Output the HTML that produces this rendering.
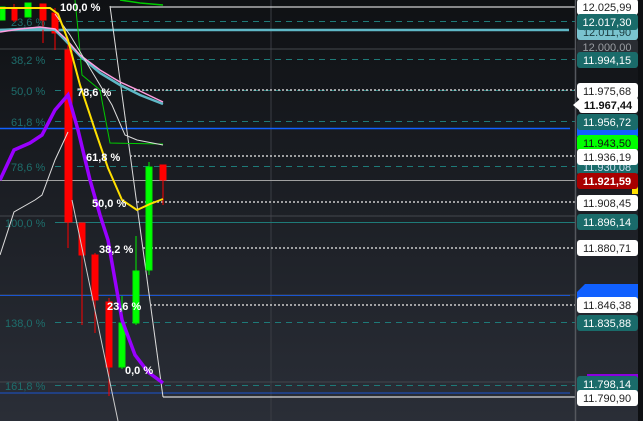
<!DOCTYPE html>
<html><head><style>
html,body{margin:0;padding:0;width:643px;height:421px;overflow:hidden;background:#15181d}
svg{display:block}
text{font-family:"Liberation Sans",sans-serif}
</style></head><body>
<svg width="643" height="421" viewBox="0 0 643 421" xmlns="http://www.w3.org/2000/svg">
<defs><linearGradient id="bg" x1="0" y1="0" x2="0" y2="1"><stop offset="0" stop-color="#0f1114"/><stop offset="1" stop-color="#2a2e37"/></linearGradient></defs>
<rect width="643" height="421" fill="url(#bg)"/>
<line x1="271" y1="0" x2="271" y2="421" stroke="#3a3d44" stroke-width="1"/>
<g stroke="#44474d" stroke-width="1">
<line x1="0" y1="49" x2="575" y2="49"/><line x1="0" y1="216" x2="575" y2="216"/><line x1="0" y1="295" x2="575" y2="295"/><line x1="0" y1="382" x2="575" y2="382"/>
</g>
<line x1="0" y1="180.5" x2="575" y2="180.5" stroke="#a0a0a0" stroke-width="1"/>
<g stroke="#1e7a78" stroke-width="1" stroke-dasharray="6,5">
<line x1="55" y1="21.5" x2="575" y2="21.5"/><line x1="55" y1="59.5" x2="575" y2="59.5"/><line x1="55" y1="90.5" x2="575" y2="90.5"/><line x1="55" y1="121.5" x2="575" y2="121.5"/><line x1="55" y1="166.5" x2="575" y2="166.5"/><line x1="55" y1="322.5" x2="575" y2="322.5"/><line x1="55" y1="385.5" x2="575" y2="385.5"/>
</g>
<line x1="55" y1="222.5" x2="575" y2="222.5" stroke="#1e7a78" stroke-width="1"/>
<g fill="#1e6e6c" font-size="11">
<text x="11" y="26">23,6 %</text><text x="11" y="64">38,2 %</text><text x="11" y="95">50,0 %</text><text x="11" y="126">61,8 %</text><text x="11" y="171">78,6 %</text><text x="5" y="227">100,0 %</text><text x="5" y="327">138,0 %</text><text x="5" y="390">161,8 %</text>
</g>
<line x1="0" y1="128.5" x2="570" y2="128.5" stroke="#1060ff" stroke-width="1.5"/>
<line x1="0" y1="295.5" x2="570" y2="295.5" stroke="#1a55d0" stroke-width="1"/>
<line x1="0" y1="393" x2="570" y2="393" stroke="#1a55d0" stroke-width="1"/>
<line x1="0" y1="30" x2="569" y2="30" stroke="#5fb8c6" stroke-width="2.5"/>
<polyline points="110,7 575,7" fill="none" stroke="#fff" stroke-width="1"/>
<line x1="110" y1="6" x2="163" y2="397" stroke="#ddd" stroke-width="1"/>
<line x1="163" y1="397" x2="575" y2="397" stroke="#fff" stroke-width="1"/>
<g stroke="#ccc" stroke-width="1.5" stroke-dasharray="2,2">
<line x1="130" y1="90" x2="575" y2="90"/><line x1="130" y1="156" x2="575" y2="156"/><line x1="137" y1="202" x2="575" y2="202"/><line x1="143" y1="248" x2="575" y2="248"/><line x1="150" y1="305" x2="575" y2="305"/>
</g>
<g fill="#ff0000" stroke="#ff0000" stroke-width="1">
<line x1="43" y1="4" x2="43" y2="43"/><rect x="40" y="4" width="6" height="16"/>
<line x1="55" y1="8" x2="55" y2="50"/><rect x="52" y="13" width="6" height="20"/>
<line x1="14" y1="4" x2="14" y2="22"/><rect x="12" y="8" width="5" height="12"/>
<line x1="68" y1="45" x2="68" y2="248"/><rect x="65" y="50" width="7" height="172"/>
<line x1="82" y1="223" x2="82" y2="325"/><rect x="79" y="223" width="6" height="32"/>
<line x1="95" y1="253" x2="95" y2="333"/><rect x="92" y="255" width="6" height="45"/>
<line x1="109" y1="298" x2="109" y2="396"/><rect x="106" y="302" width="6" height="65"/>
<line x1="163" y1="165" x2="163" y2="205"/><rect x="160" y="165" width="6" height="15"/>
</g>
<g fill="#00ff00" stroke="#00ee00" stroke-width="1">
<rect x="0" y="7" width="5" height="13"/>
<rect x="25" y="3" width="6" height="14"/>
<line x1="122" y1="296" x2="122" y2="369"/><rect x="119" y="323" width="6" height="44"/>
<line x1="136" y1="236" x2="136" y2="325"/><rect x="133" y="271" width="6" height="52"/>
<line x1="149" y1="162" x2="149" y2="275"/><rect x="146" y="167" width="6" height="103"/>
</g>
<polyline points="75,0 78,30 82,75 100,90 110,143 163,144" fill="none" stroke="#00cc00" stroke-width="1"/>
<polyline points="120,0 140,3 163,5" fill="none" stroke="#00cc00" stroke-width="1.5"/>
<polyline points="0,30 40,28 55,30 65,40 80,56 100,73 120,85 140,95 163,104" fill="none" stroke="#5fb8c6" stroke-width="2.5"/>
<polyline points="0,32 20,29 40,27 55,29 65,38 80,55 100,70 120,82 140,91 163,102" fill="none" stroke="#ff9ee0" stroke-width="1.5"/>
<polyline points="55,14 70,35 85,60 100,85 112,105 125,135 137,140 163,145" fill="none" stroke="#ddd" stroke-width="1"/>
<polyline points="0,255 14,212 35,200 42,195 55,160 68,132" fill="none" stroke="#ddd" stroke-width="1"/>
<line x1="72" y1="200" x2="118" y2="421" stroke="#ccc" stroke-width="1"/>
<polyline points="0,8 50,8 58,14 68,40 80,85 95,130 108,168 122,200 137,210 150,204 163,199" fill="none" stroke="#ffe000" stroke-width="2"/>
<polyline points="0,180 14,150 30,143 42,135 55,110 68,95 78,130 90,180 100,215 108,240 115,280 122,320 135,355 148,372 163,383" fill="none" stroke="#9900ff" stroke-width="3.5"/>
<g fill="#fff" font-size="11" font-weight="bold">
<text x="60" y="11">100,0 %</text><text x="77" y="96">78,6 %</text><text x="86" y="161">61,8 %</text><text x="92" y="207">50,0 %</text><text x="99" y="253">38,2 %</text><text x="107" y="310">23,6 %</text><text x="125" y="374">0,0 %</text>
</g>
<line x1="575.5" y1="0" x2="575.5" y2="421" stroke="#55585e" stroke-width="1.5"/>
<rect x="638" y="0" width="5" height="421" fill="#0e1013"/>
<g font-size="11" text-anchor="middle">
<rect x="577" y="39" width="61" height="16" rx="3" fill="#2a2d33"/><text x="607" y="51" fill="#9a9da2">12.000,00</text>
<rect x="577" y="24" width="61" height="16" rx="3" fill="#7ac3cf"/><text x="607" y="36" fill="#1a3a3e">12.011,90</text>
<rect x="577" y="-1" width="61" height="16" rx="3" fill="#fff"/><text x="607" y="11" fill="#222">12.025,99</text>
<rect x="577" y="14" width="61" height="16" rx="3" fill="#1a6b6a"/><text x="607" y="26" fill="#fff">12.017,30</text>
<rect x="577" y="52" width="61" height="16" rx="3" fill="#1a6b6a"/><text x="607" y="64" fill="#fff">11.994,15</text>
<rect x="577" y="83" width="61" height="16" rx="3" fill="#fff"/><text x="607" y="95" fill="#222">11.975,68</text>
<rect x="579" y="97" width="59" height="16" rx="3" fill="#fff"/><polygon points="573,105 580,99 580,111" fill="#fff"/><text x="608" y="109" fill="#111" font-weight="bold">11.967,44</text>
<rect x="577" y="122" width="61" height="16" rx="3" fill="#1060ff"/>
<rect x="577" y="135" width="61" height="16" rx="3" fill="#00ff00"/><text x="607" y="147" fill="#111">11.943,50</text>
<rect x="577" y="114" width="61" height="16" rx="3" fill="#1a6b6a"/><text x="607" y="126" fill="#fff">11.956,72</text>
<rect x="577" y="159" width="61" height="16" rx="3" fill="#1a6b6a"/><text x="607" y="171" fill="#cde">11.930,08</text>
<rect x="577" y="149" width="61" height="16" rx="3" fill="#fff"/><text x="607" y="161" fill="#222">11.936,19</text>
<rect x="632" y="180" width="6" height="14" fill="#ffe000"/>
<rect x="577" y="173" width="61" height="16" rx="3" fill="#a80000"/><text x="607" y="185" fill="#fff" font-weight="bold">11.921,59</text>
<rect x="577" y="195" width="61" height="16" rx="3" fill="#fff"/><text x="607" y="207" fill="#222">11.908,45</text>
<rect x="577" y="214" width="61" height="16" rx="3" fill="#1a6b6a"/><text x="607" y="226" fill="#fff">11.896,14</text>
<rect x="577" y="240" width="61" height="16" rx="3" fill="#fff"/><text x="607" y="252" fill="#222">11.880,71</text>
<polygon points="585,284 638,284 638,299 577,299 577,292" fill="#1060ff"/>
<rect x="577" y="297" width="61" height="16" rx="3" fill="#fff"/><text x="607" y="309" fill="#222">11.846,38</text>
<rect x="577" y="315" width="61" height="16" rx="3" fill="#1a6b6a"/><text x="607" y="327" fill="#fff">11.835,88</text>
<rect x="587" y="374" width="51" height="10" fill="#8a00e0"/>
<rect x="577" y="376" width="61" height="16" rx="3" fill="#1a6b6a"/><text x="607" y="388" fill="#fff">11.798,14</text>
<rect x="577" y="390" width="61" height="16" rx="3" fill="#fff"/><text x="607" y="402" fill="#222">11.790,90</text>
</g>
</svg>
</body></html>
